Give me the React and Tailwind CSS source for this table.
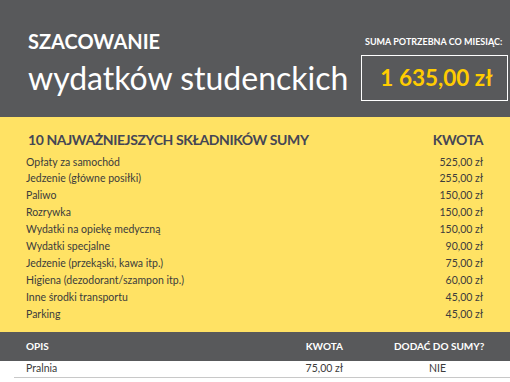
import React from 'react';

const items = [
  ['Opłaty za samochód', '525,00 zł'],
  ['Jedzenie (główne posiłki)', '255,00 zł'],
  ['Paliwo', '150,00 zł'],
  ['Rozrywka', '150,00 zł'],
  ['Wydatki na opiekę medyczną', '150,00 zł'],
  ['Wydatki specjalne', '90,00 zł'],
  ['Jedzenie (przekąski, kawa itp.)', '75,00 zł'],
  ['Higiena (dezodorant/szampon itp.)', '60,00 zł'],
  ['Inne środki transportu', '45,00 zł'],
  ['Parking', '45,00 zł'],
];

export default function App() {
  return (
    <div className="w-[510px] h-[382px] overflow-hidden bg-white font-['Lato',sans-serif]">
      <header className="flex h-[117px] bg-[#58595b]">
        <div className="pl-[28px] pt-[29px] text-white">
          <h1 className="m-0 text-[20px] font-bold leading-[24px]">SZACOWANIE</h1>
          <p className="m-0 mt-[6px] text-[32px] leading-[38px]">wydatków studenckich</p>
        </div>
        <div className="ml-auto w-[149px] pt-[36px]">
          <p className="m-0 pl-[4px] text-[9px] font-bold leading-[11px] text-white">SUMA POTRZEBNA CO MIESIĄC:</p>
          <div className="mt-[8px] flex h-[46px] w-[147px] items-center justify-center border border-white pl-[4px]">
            <span className="text-[22.5px] font-bold text-[#ffcc00]">1 635,00 zł</span>
          </div>
        </div>
      </header>

      <section className="h-[215px] bg-[#ffe264] pl-[26px] pr-[27px] pt-[13px]">
        <div className="flex items-center justify-between pl-[2px] text-[14px] font-bold leading-[20px] tracking-[-0.4px] text-[#454655]">
          <span>10 NAJWAŻNIEJSZYCH SKŁADNIKÓW SUMY</span>
          <span>KWOTA</span>
        </div>
        <ul className="m-0 mt-[4px] list-none p-0">
          {items.map(([label, value]) => (
            <li key={label} className="flex h-[16.9px] items-center justify-between text-[10.5px] text-[#3c3c3c]">
              <span>{label}</span>
              <span>{value}</span>
            </li>
          ))}
        </ul>
      </section>

      <div className="flex h-[29px] items-center bg-[#58595b] pl-[26px] text-[10px] font-bold text-white">
        <span className="w-[240px]">OPIS</span>
        <span className="w-[77px] text-right">KWOTA</span>
        <span className="ml-[51px]">DODAĆ DO SUMY?</span>
      </div>
      <div className="ml-[14px] flex h-[17px] items-center border-b border-[#c8c8c8] pl-[12px] text-[10.5px] text-[#3c3c3c]">
        <span className="w-[240px]">Pralnia</span>
        <span className="w-[77px] text-right">75,00 zł</span>
        <span className="ml-[86px]">NIE</span>
      </div>
    </div>
  );
}
